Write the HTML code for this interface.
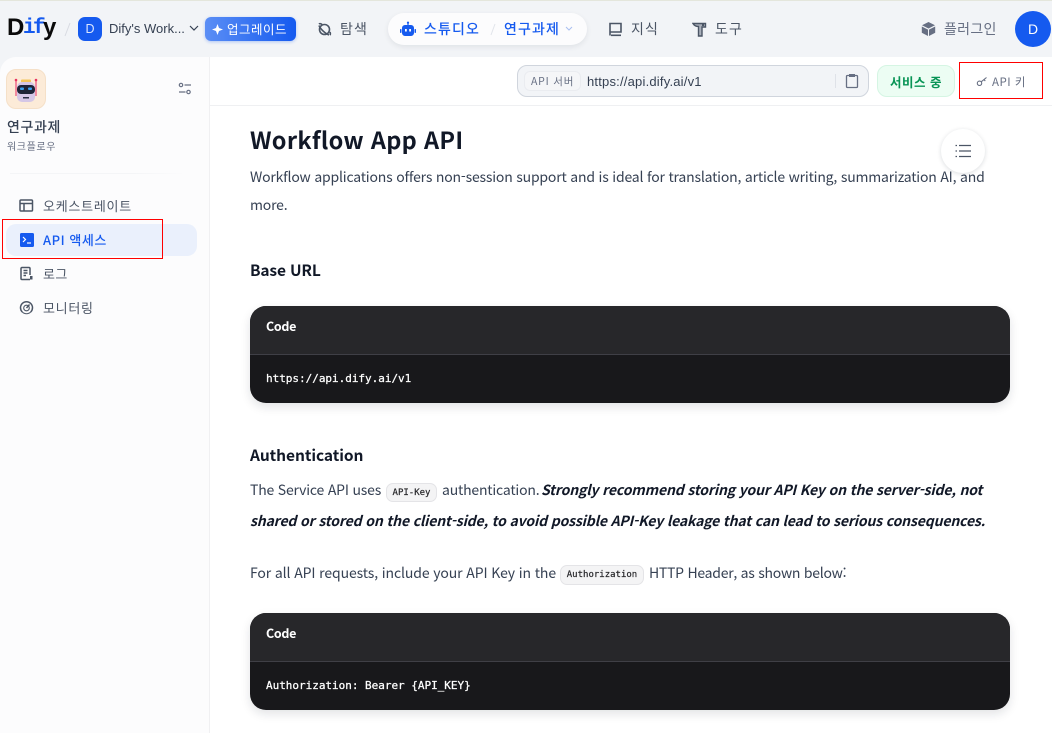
<!DOCTYPE html>
<html lang="ko"><head><meta charset="utf-8"><title>Dify</title>
<style>
*{box-sizing:border-box;margin:0;padding:0}
html,body{width:1052px;height:733px;overflow:hidden;background:#f2f4f7;font-family:"Liberation Sans","Noto Sans CJK KR",sans-serif}
.a{position:absolute}
.t{position:absolute;white-space:nowrap;line-height:20px}
.k{font-family:"Noto Sans CJK KR","Liberation Sans",sans-serif}
.n{font-size:14px;letter-spacing:1.1px;color:#4b5565}
.b{color:#364153;font-family:"Noto Sans CJK KR",sans-serif;font-size:14px;font-weight:400;letter-spacing:-.19px}
.h{color:#111827;font-family:"Noto Sans CJK KR",sans-serif;font-weight:700}
.st{color:#111827;font-family:"Noto Sans CJK KR",sans-serif;font-size:14px;font-weight:700;font-style:italic;letter-spacing:-.16px}
.code{position:absolute;left:250px;width:760px;height:97px;border-radius:16px;background:#18181b;overflow:hidden;box-shadow:0 4px 10px rgba(16,24,40,.12)}
.code i{display:block;height:49px;background:#27272a;border-bottom:1px solid #3f3f46}
.code b{position:absolute;left:16px;top:10px;color:#fff;font:700 12.5px/20px "Noto Sans CJK KR",sans-serif;letter-spacing:-.3px;white-space:nowrap}
.code u{position:absolute;left:16px;top:63px;color:#fff;font:400 11px/20px "DejaVu Sans Mono",monospace;letter-spacing:-.02px;-webkit-text-stroke:.25px #fff;text-decoration:none;white-space:pre}
.c{position:absolute;height:19px;border:1px solid #e4e4e7;background:#f4f4f5;border-radius:7px;color:#27272a;font:400 9px/18px "DejaVu Sans Mono",monospace;-webkit-text-stroke:.2px #27272a;text-align:center}
svg{position:absolute;display:block}
</style></head><body>
<div class="a" style="left:0;top:0;width:1052px;height:1px;background:#e4e6dc"></div>

<!-- main panels -->
<div class="a" style="left:0;top:57px;width:210px;height:676px;background:#fcfcfd;border-right:1px solid #f0f0f2;border-top-left-radius:16px"></div>
<div class="a" style="left:210px;top:57px;width:842px;height:676px;background:#fff"></div>
<div class="a" style="left:210px;top:105px;width:842px;height:1px;background:#eff0f2"></div>

<!-- logo -->
<div class="t" style="left:7px;top:17px;font:700 24px/22px 'Liberation Sans',sans-serif;color:#0a0a0a">D</div>
<div class="t" style="left:23px;top:18px;font:700 21px/22px 'Liberation Mono',monospace;letter-spacing:-2.600px;color:#155aef">if</div>
<div class="t" style="left:43px;top:17px;font:700 24px/22px 'Liberation Sans',sans-serif;color:#0a0a0a">y</div>
<svg style="left:64px;top:22px" width="7" height="15"><path d="M1 14 6 1" stroke="#d8dbe2" stroke-width="1"/></svg>
<div class="a" style="left:78px;top:17px;width:24px;height:24px;border-radius:7px;background:#155aef;color:#dbe6ff;font:400 12.5px/24px 'Liberation Sans',sans-serif;text-align:center">D</div>
<div class="t" style="left:109px;top:19px;font-size:13px;color:#354052">Dify's Work...</div>
<svg style="left:189px;top:25px" width="10" height="7" fill="none"><path d="M1 1l4 4 4-4" stroke="#354052" stroke-width="1.2"/></svg>
<div class="a" style="left:205px;top:17px;width:91px;height:24px;border-radius:6px;background:linear-gradient(90deg,#5b8ef5,#155aef);box-shadow:0 1px 3px rgba(21,90,239,.3)"></div>
<svg style="left:212px;top:24px" width="11" height="11"><path d="M5.500 0 7 4l4 1.500-4 1.500-1.500 4L4 7 0 5.500 4 4z" fill="#fff"/></svg>
<div class="t k" style="left:227px;top:19px;font-size:12.5px;color:#fff;letter-spacing:.5px">업그레이드</div>

<!-- nav -->
<svg style="left:317px;top:22px" width="15" height="15" fill="none" stroke="#4b5565" stroke-width="1.600"><circle cx="7.500" cy="7.500" r="5"/><path d="M2 3.500c1 3 6 8 10 9.500"/><path d="M2 2c.5-.5 2-.5 3 .5M13 13c.5-.5.500-2 0-3"/></svg>
<div class="t k n" style="left:340px;top:19px">탐색</div>

<div class="a" style="left:388px;top:13px;width:199px;height:32px;border-radius:16px;background:#fcfcfd;box-shadow:0 2px 6px rgba(16,24,40,.08)"></div>
<svg style="left:400px;top:21px" width="16" height="16"><path d="M8 .5a1.200 1.200 0 0 1 .6 2.200V4H11a3 3 0 0 1 3 3v5a3 3 0 0 1-3 3H5a3 3 0 0 1-3-3V7a3 3 0 0 1 3-3h2.400V2.700A1.200 1.200 0 0 1 8 .5z" fill="#155aef"/><rect x="0" y="8" width="1.500" height="4" rx=".7" fill="#155aef"/><rect x="14.500" y="8" width="1.500" height="4" rx=".7" fill="#155aef"/><rect x="5" y="8" width="1.800" height="2.500" fill="#fff"/><rect x="9.200" y="8" width="1.800" height="2.500" fill="#fff"/></svg>
<div class="t k n" style="left:424px;top:19px;color:#155aef;font-weight:500">스튜디오</div>
<svg style="left:490px;top:23px" width="6" height="13"><path d="M1 12 5 1" stroke="#e1e4ea"/></svg>
<div class="t k n" style="left:504px;top:19px;color:#155aef;font-weight:500">연구과제</div>
<svg style="left:565px;top:26px" width="8" height="6" fill="none"><path d="M1 1l3 3 3-3" stroke="#a9bff0" stroke-width="1"/></svg>

<svg style="left:608px;top:22px" width="15" height="15" fill="none" stroke="#4b5565" stroke-width="1.600"><path d="M2 13.500V1.500h11v8.500H2"/><path d="M3 13.300h10"/></svg>
<div class="t k n" style="left:631px;top:19px">지식</div>
<svg style="left:692px;top:22px" width="15" height="15"><path d="M1 1.500h12.500V5H10v9H6.500V4.500C4.500 4.500 2.500 4 1 1.500z" fill="#aab0bb" stroke="#4b5565" stroke-width="1.400"/><path d="M11 1v3" stroke="#4b5565" stroke-width="2"/></svg>
<div class="t k n" style="left:715px;top:19px">도구</div>

<svg style="left:921px;top:21px" width="15" height="16"><path d="M7.500 1 14 4.200 7.500 7.500 1 4.200z" fill="#676f83"/><path d="M.8 5.500 7 8.600V15L.8 11.800zM14.200 5.500 8 8.600V15l6.200-3.200z" fill="#676f83"/></svg>
<div class="t k" style="left:944px;top:19px;font-size:14px;color:#676f83;letter-spacing:.3px">플러그인</div>
<div class="a" style="left:1015px;top:11px;width:36px;height:36px;border-radius:50%;background:#155aef;color:#fff;font:400 14px/36px 'Liberation Sans',sans-serif;text-align:center">D</div>

<!-- sidebar -->
<div class="a" style="left:6px;top:69px;width:40px;height:40px;border-radius:10px;background:#fcebd8;border:1px solid #f5e0c8"></div>
<svg style="left:12px;top:76px" width="28" height="28">
<path d="M4 4v16M24 4v16" stroke="#ef6a8a" stroke-width="1.500"/><circle cx="4" cy="4" r="1.300" fill="#e8345e"/><circle cx="24" cy="4" r="1.300" fill="#e8345e"/>
<rect x="9" y="3.500" width="10" height="3" rx="1" fill="#f5c65a"/>
<rect x="5" y="6" width="18" height="20" rx="5" fill="#d5c7e6"/>
<rect x="5" y="9" width="18" height="9" rx="4" fill="#1e2436"/>
<rect x="8" y="11.500" width="4" height="2.500" rx="1" fill="#3aa0f0"/><rect x="16" y="11.500" width="4" height="2.500" rx="1" fill="#3aa0f0"/>
<rect x="11" y="21" width="6" height="1.500" fill="#2b2f45"/>
</svg>
<svg style="left:178px;top:82px" width="14" height="14" fill="none" stroke="#676f83" stroke-width="1.200"><circle cx="3" cy="3" r="1.700"/><path d="M6.500 3h6.500M1 10h6.500"/><circle cx="10.500" cy="10" r="1.700"/></svg>
<div class="t k" style="left:7px;top:117px;font-size:14px;font-weight:500;color:#354052;letter-spacing:.6px">연구과제</div>
<div class="t k" style="left:7px;top:136px;font-size:10px;color:#676f83;letter-spacing:.6px">워크플로우</div>
<div class="a" style="left:10px;top:173px;width:176px;height:1px;background:linear-gradient(90deg,#f4f5f7,#f4f5f7 70%,#fcfcfd)"></div>

<svg style="left:19px;top:198px" width="15" height="15" fill="none" stroke="#4b5565" stroke-width="1.500"><rect x="1" y="2" width="12.500" height="11" rx="1"/><path d="M1 5.500h12.500M5 5.500V13"/></svg>
<div class="t k" style="left:43px;top:196px;font-size:13px;color:#4b5565;letter-spacing:.75px">오케스트레이트</div>

<div class="a" style="left:6px;top:224px;width:191px;height:32px;border-radius:10px;background:#eaf0fc"></div>
<svg style="left:20px;top:233px" width="14" height="14"><rect width="14" height="14" rx="1.500" fill="#155aef" y="0"/><path d="M3 4l2.500 2.500L3 9" stroke="#fff" stroke-width="1.200" fill="none"/><path d="M7 10h4" stroke="#fff" stroke-width="1.200"/></svg>
<div class="t k" style="left:43px;top:230px;font-size:13px;font-weight:500;color:#155aef;letter-spacing:.55px">API 액세스</div>

<svg style="left:19px;top:266px" width="15" height="15" fill="none" stroke="#4b5565" stroke-width="1.500"><path d="M11 9V2.500A1 1 0 0 0 10 1.500H3a1 1 0 0 0-1 1v10a1 1 0 0 0 1 1h8"/><path d="M4.500 4.500h4M4.500 7h4M4.500 9.500h2.500"/><rect x="11" y="10" width="2.500" height="3.500" fill="#4b5565" stroke="none"/></svg>
<div class="t k" style="left:43px;top:264px;font-size:13px;color:#4b5565;letter-spacing:.45px">로그</div>
<svg style="left:19px;top:300px" width="15" height="15" fill="none" stroke="#4b5565" stroke-width="1.500"><path d="M3.300 12A6 6 0 1 1 11.700 12" /><path d="M3.300 12A6 6 0 0 0 11.700 12" stroke-width="1"/><circle cx="7.500" cy="8" r="2.800" stroke-width="1.100"/><path d="M7.500 8 10.500 4.500" stroke-width="1.400"/></svg>
<div class="t k" style="left:43px;top:298px;font-size:13px;color:#4b5565;letter-spacing:.7px">모니터링</div>

<!-- top toolbar -->
<div class="a" style="left:517px;top:65px;width:352px;height:32px;border-radius:10px;background:#f2f4f7;border:1px solid #d0d5dd"></div>
<div class="a" style="left:524px;top:71px;width:57px;height:20px;border-radius:6px;background:#f5f6f8;border:1px solid #eaecf0"></div>
<div class="t k" style="left:531px;top:72px;font-size:10.500px;color:#676f83;letter-spacing:.8px">API 서버</div>
<div class="t" style="left:587px;top:72px;font-size:13px;letter-spacing:.2px;color:#354052">https://api.dify.ai/v1</div>
<div class="a" style="left:835px;top:74px;width:1px;height:14px;background:#dfe2e8"></div>
<svg style="left:845px;top:73px" width="14" height="16" fill="none" stroke="#676f83" stroke-width="1.300"><rect x="1.500" y="2.500" width="11" height="12" rx="1"/><rect x="4" y="1" width="6" height="3" fill="#676f83" stroke="none"/></svg>
<div class="a" style="left:877px;top:65px;width:78px;height:32px;border-radius:10px;background:#ecfdf3;border:1px solid #d5f5e3"></div>
<div class="t k" style="left:890px;top:72px;font-size:12.500px;font-weight:700;color:#079455;letter-spacing:.5px">서비스 중</div>
<div class="a" style="left:959px;top:62px;width:84px;height:37px;border:1px solid #f00;background:#fff"></div>
<svg style="left:976px;top:76px" width="12" height="11" fill="none" stroke="#676f83" stroke-width="1.100"><circle cx="3.500" cy="7.300" r="2.200"/><path d="M5.200 5.800 10.500 1.500M8 3.700l1.300 1.300"/></svg>
<div class="t k" style="left:992px;top:72px;font-size:11.500px;color:#676f83;letter-spacing:.5px">API 키</div>

<!-- sidebar red box -->
<div class="a" style="left:2px;top:219px;width:161px;height:40px;border:1px solid #f00"></div>

<!-- content -->
<div class="t h" style="left:250px;top:128px;font-size:23.500px;line-height:22px;letter-spacing:.3px">Workflow App API</div>
<div class="t b" style="left:250px;top:167px">Workflow applications offers non-session support and is ideal for translation, article writing, summarization AI, and</div>
<div class="t b" style="left:250px;top:195px">more.</div>
<div class="a" style="left:941px;top:129px;width:44px;height:44px;border-radius:50%;background:#fff;box-shadow:0 1px 5px rgba(16,24,40,.15)"></div>
<svg style="left:955px;top:144px" width="16" height="14"><path d="M4 1.500h12M4 7h12M4 12.500h12" stroke="#4b5565" stroke-width="1.300"/><path d="M.500 1.500h1.500M.500 7h1.500M.500 12.500h1.500" stroke="#4b5565" stroke-width="1.300"/></svg>

<div class="t h" style="left:250px;top:260px;font-size:15.500px;letter-spacing:-.15px">Base URL</div>
<div class="code" style="top:306px"><i></i><b>Code</b><u>https://api.dify.ai/v1</u></div>

<div class="t h" style="left:250px;top:445px;font-size:15.500px;letter-spacing:-.05px">Authentication</div>
<div class="t b" style="left:250px;top:480px">The Service API uses</div>
<div class="c" style="left:386px;top:483px;width:51px">API-Key</div>
<div class="t b" style="left:442px;top:480px">authentication.</div>
<div class="t st" style="left:541px;top:480px">Strongly recommend storing your API Key on the server-side, not</div>
<div class="t st" style="left:250px;top:511px">shared or stored on the client-side, to avoid possible API-Key leakage that can lead to serious consequences.</div>
<div class="t b" style="left:250px;top:563px;letter-spacing:-.11px">For all API requests, include your API Key in the</div>
<div class="c" style="left:560px;top:565px;width:84px;height:20px;line-height:19px">Authorization</div>
<div class="t b" style="left:649px;top:563px;letter-spacing:-.26px">HTTP Header, as shown below:</div>
<div class="code" style="top:613px"><i></i><b>Code</b><u>Authorization: Bearer {API_KEY}</u></div>
</body></html>
